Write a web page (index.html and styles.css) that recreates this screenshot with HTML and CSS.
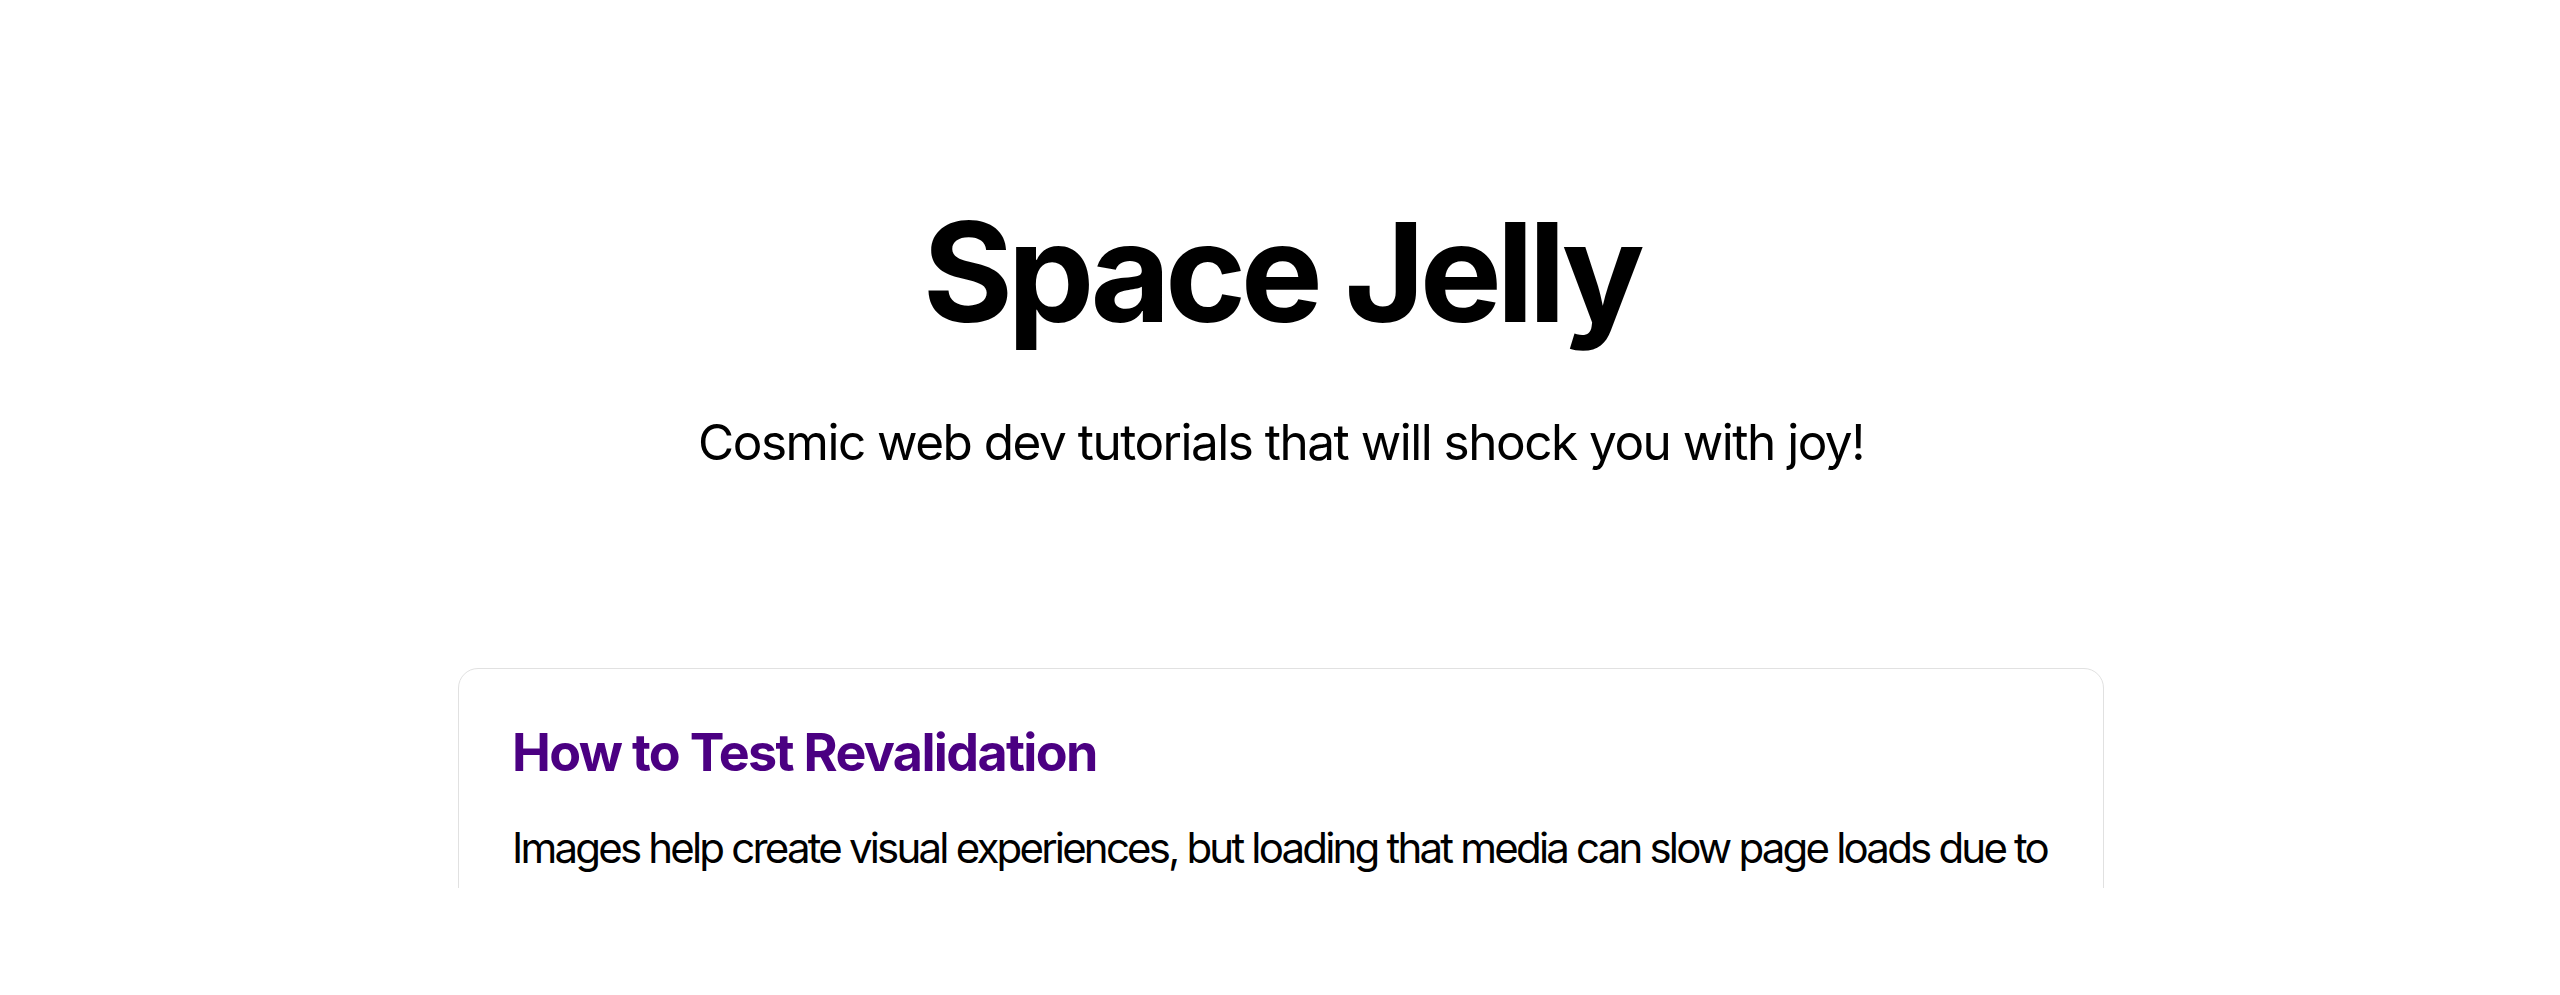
FILE: index.html
```html
<!DOCTYPE html>
<html lang="en">
<head>
<meta charset="utf-8">
<title>Space Jelly</title>
<link rel="stylesheet" href="styles.css">
</head>
<body>
<div class="frame">
  <main class="main">
    <h1 class="title">Space Jelly</h1>
    <p class="description">Cosmic web dev tutorials that will shock you with joy!</p>
    <ul class="grid">
      <li class="card">
        <a class="card-link" href="#">
          <h2 class="card-title">How to Test Revalidation</h2>
          <p class="card-excerpt">Images help create visual experiences, but loading that media can slow page loads due to their size and the number of requests it takes to fetch them all. How can we use Next.js to make sure our pages stay fast?</p>
        </a>
      </li>
    </ul>
  </main>
</div>
</body>
</html>
```

FILE: styles.css
```css
html, body {
  margin: 0;
  padding: 0;
  background: #ffffff;
  color: #000000;
  font-family: Inter, "Noto Sans", sans-serif;
}

.frame {
  height: 888px;
  overflow: hidden;
}

.main {
  display: flex;
  flex-direction: column;
  align-items: center;
  padding: 193px 0 0 2px;
}

.title {
  margin: 0;
  font-size: 138px;
  line-height: 1.15;
  font-weight: 700;
  letter-spacing: -5.5px;
  text-align: center;
}

.description {
  margin: 53px 0 0;
  font-size: 49.5px;
  line-height: 1.5;
  font-weight: 400;
  letter-spacing: -1.5px;
  text-align: center;
}

.grid {
  list-style: none;
  margin: 189px 0 0;
  padding: 0;
  width: 1646px;
}

.card {
  border: 1px solid #e1e1e1;
  border-radius: 20px;
  padding: 53px;
}

.card-link {
  display: block;
  color: inherit;
  text-decoration: none;
}

.card-title {
  margin: 0 0 32px;
  font-size: 52px;
  line-height: 1.2;
  font-weight: 700;
  letter-spacing: -1.65px;
  color: #4b0082;
}

.card-excerpt {
  margin: 0;
  font-size: 42px;
  line-height: 1.5;
  font-weight: 400;
  letter-spacing: -2.8px;
}
```
